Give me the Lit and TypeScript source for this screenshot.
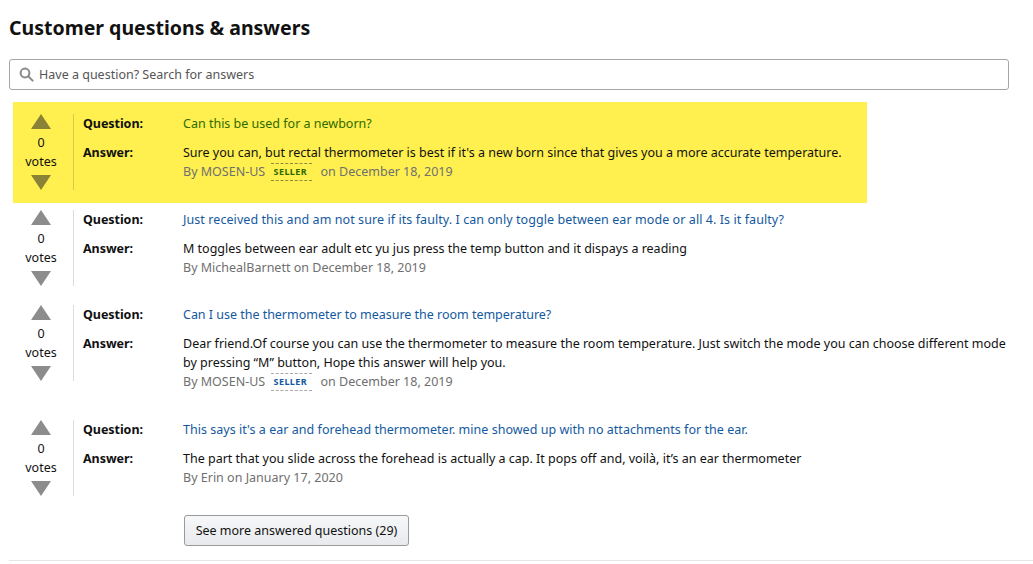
import { LitElement, html, css } from "lit";
import { customElement } from "lit/decorators.js";

interface QA {
  q: string;
  a: string[];
  by: string;
  seller: boolean;
  date: string;
  hl?: boolean;
  track?: number;
}

const items: QA[] = [
  { q: "Can this be used for a newborn?", a: ["Sure you can, but rectal thermometer is best if it's a new born since that gives you a more accurate temperature."], by: "MOSEN-US", seller: true, date: "December 18, 2019", hl: true },
  { q: "Just received this and am not sure if its faulty. I can only toggle between ear mode or all 4. Is it faulty?", a: ["M toggles between ear adult etc yu jus press the temp button and it dispays a reading"], by: "MichealBarnett", seller: false, date: "December 18, 2019", track: 0.075 },
  { q: "Can I use the thermometer to measure the room temperature?", a: ["Dear friend.Of course you can use the thermometer to measure the room temperature. Just switch the mode you can choose different mode", "by pressing “M” button, Hope this answer will help you."], by: "MOSEN-US", seller: true, date: "December 18, 2019", track: -0.02 },
  { q: "This says it's a ear and forehead thermometer. mine showed up with no attachments for the ear.", a: ["The part that you slide across the forehead is actually a cap. It pops off and, voilà, it’s an ear thermometer"], by: "Erin", seller: false, date: "January 17, 2020", track: 0.03 },
];

@customElement("app-root")
export class AppRoot extends LitElement {
  static styles = css`
    :host { display: block; width: 1033px; height: 564px; overflow: hidden; background: #fff; color: #111; font-family: "Noto Sans", sans-serif; font-size: 12.5px; line-height: 19px; }
    .page { padding: 0 24px 0 9px; }
    h1 { margin: 0; padding-top: 15px; font-size: 19.5px; line-height: 26px; font-weight: 700; color: #111; }
    .search { box-sizing: border-box; height: 31px; margin-top: 18px; display: flex; align-items: center; gap: 5px; padding-left: 9px; border: 1px solid #a6a6a6; border-radius: 3px; color: #555; }
    .search svg { display: block; }
    .list { margin-top: 12px; padding-left: 4px; }
    .wrap { margin-bottom: 19px; }
    .wrap.hl { width: 854px; background: #ffef4f; padding: 12px 0 13px; margin-bottom: 7px; }
    .row { display: flex; align-items: flex-start; }
    .votes { box-sizing: content-box; width: 56px; flex: none; display: flex; flex-direction: column; align-items: center; height: 76px; justify-content: space-between; text-align: center; padding-right: 4px; border-right: 1px solid #ddd; }
    .hl .votes { border-right-color: #d9cb4a; }
    .votes svg { display: block; fill: #8c8c8c; }
    .hl .votes svg { fill: #8a8335; }
    .body { flex: 1; min-width: 0; padding: 0 0 9px 9px; }
    .line { display: flex; }
    .line + .line { margin-top: 10px; }
    .label { width: 100px; flex: none; font-weight: 700; letter-spacing: -0.05px; }
    .q { color: #14599f; }
    .hl .q { color: #2f6b00; }
    .text { white-space: nowrap; }
    .by { color: #6f6f6f; display: flex; align-items: center; white-space: pre; }
    .text + .text + .by { margin-bottom: 1px; }
    .badge { box-sizing: border-box; display: inline-block; height: 18px; width: 41px; margin: 0 8px 0 3px; padding-left: 2px; text-align: left; border-top: 1px dashed #aaa; border-bottom: 1px dashed #aaa; font-size: 9px; line-height: 16px; font-weight: 700; letter-spacing: 0.45px; color: #14599f; }
    .hl .badge { color: #2f6b00; border-color: #8a8f3a; }
    .more { margin-left: 175px; box-sizing: border-box; display: block; width: 225px; height: 31px; padding: 0; border: 1px solid #9a9a9a; border-radius: 3px; background: linear-gradient(#f7f8fa, #e7e9ec); color: #111; font: inherit; text-align: center; }
    hr { margin: 14px 0 0; border: 0; border-top: 1px solid #e7e7e7; width: 1024px; }
  `;

  private renderRow(i: QA) {
    return html`<div class="wrap ${i.hl ? "hl" : ""}">
      <div class="row">
        <div class="votes">
          <svg width="20" height="15" viewBox="0 0 20 15"><path d="M10 0 20 15H0Z" /></svg>
          <div>0<br />votes</div>
          <svg width="20" height="15" viewBox="0 0 20 15"><path d="M0 0H20L10 15Z" /></svg>
        </div>
        <div class="body">
          <div class="line"><div class="label">Question:</div><div class="q text" style="letter-spacing:${i.track ?? 0}px">${i.q}</div></div>
          <div class="line">
            <div class="label">Answer:</div>
            <div>
              ${i.a.map((t) => html`<div class="text">${t}</div>`)}
              <div class="by">By ${i.by}${i.seller ? html` <span class="badge">SELLER</span>` : " "}on ${i.date}</div>
            </div>
          </div>
        </div>
      </div>
    </div>`;
  }

  render() {
    return html`<div class="page">
      <h1>Customer questions &amp; answers</h1>
      <div class="search">
        <svg width="15" height="15" viewBox="0 0 15 15" fill="none" stroke="#888" stroke-width="2"><circle cx="6" cy="6" r="4.4" /><path d="M9.4 9.4 13.6 13.6" stroke-linecap="round" /></svg>
        <span>Have a question? Search for answers</span>
      </div>
      <div class="list">${items.map((i) => this.renderRow(i))}</div>
      <button class="more">See more answered questions (29)</button>
      <hr />
    </div>`;
  }
}
